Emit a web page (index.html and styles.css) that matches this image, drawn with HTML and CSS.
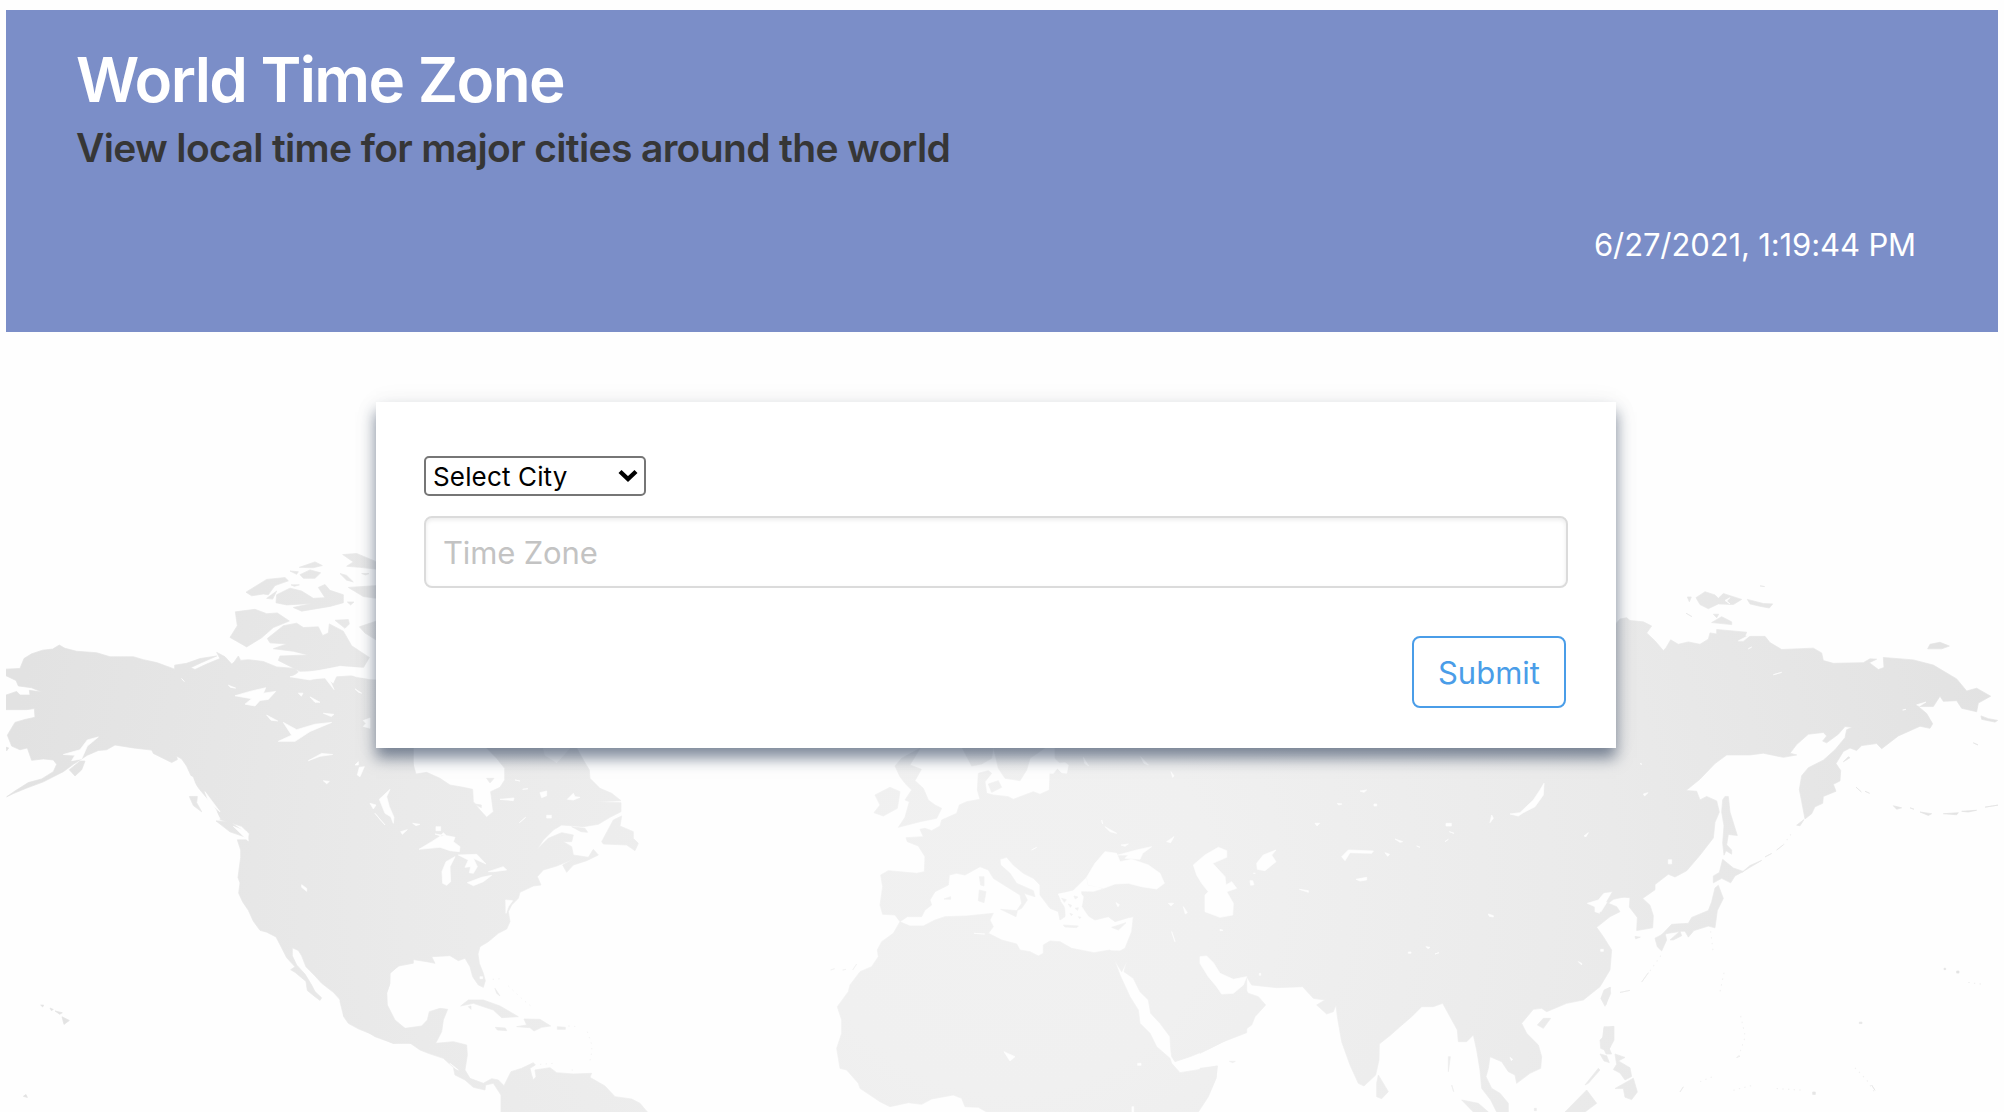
FILE: index.html
```html
<!DOCTYPE html>
<html lang="en">
<head>
<meta charset="utf-8">
<title>World Time Zone</title>
<link rel="stylesheet" href="styles.css">
</head>
<body>
<svg class="map" viewBox="0 0 2004 1112" aria-hidden="true">
  <defs>
    <radialGradient id="shade" gradientUnits="userSpaceOnUse" cx="1010" cy="890" r="1010">
      <stop offset="0" stop-color="#f1f1f1"/><stop offset=".2" stop-color="#f0f0f0"/><stop offset=".6" stop-color="#eaeaea"/><stop offset="1" stop-color="#e2e2e2"/>
    </radialGradient>
    <mask id="land" maskUnits="userSpaceOnUse" x="6" y="500" width="1992" height="612">
      <!-- Alaska, western Canada, Pacific coast -->
      <g transform="translate(0 540) scale(.33333 .3648)">
        <path class="l" d="M18 354L60 352 72 325 95 312 128 302 158 299 178 288 195 297 230 305 290 309 330 320 400 320 430 328 470 336 524 354 524 343 560 338 600 325 650 318 600 338 572 350 585 355 620 340 660 325 650 308 675 320 695 340 702 335 715 318 722 330 745 328 790 333 830 348 885 352 895 362 875 375 930 385 975 375 1000 395 1010 375 1060 372 1110 383 1140 383 1140 560 1240 560 1240 1160 1195 1168 1170 1188 1168 1220 1160 1240 1160 1275 1180 1315 1200 1332 1240 1350 1240 1380 1180 1380 1130 1360 1075 1340 1045 1325 1030 1305 1035 1275 1000 1240 965 1215 945 1195 918 1170 905 1140 895 1125 877 1118 877 1140 890 1165 915 1190 935 1220 945 1238 965 1255 960 1262 945 1252 922 1235 918 1210 885 1185 872 1178 885 1170 860 1145 845 1118 828 1088 800 1075 780 1070 760 1045 745 1015 728 992 716 968 720 940 714 925 722 870 722 850 712 822 745 822 748 805 725 785 660 766 650 740 625 712 600 685 580 660 560 620 545 600 530 592 532 602 515 610 460 585 455 576 400 570 345 562 320 575 295 577 262 590 245 600 220 615 190 635 130 663 80 680 40 695 20 704 45 688 85 665 125 655 160 635 170 615 160 603 130 600 95 604 82 570 60 575 35 565 22 535 45 500 75 492 105 486 103 462 80 465 18 465 18 425 50 415 60 425 90 425 88 412 125 417 95 405 55 400 48 385 18 372Z"/>
        <path class="l" d="M208 630L240 606 255 606 245 630 225 647ZM568 703L592 703 590 720 605 745 580 728ZM648 770L690 772 725 795 738 815 690 800ZM18 568l8 2-6 8ZM186 1307L208 1317 192 1328ZM150 1283l10 4-6 3ZM165 1291l22 5-8 4ZM122 1275l9 0-3 5ZM70 1525l8-5 4 8Z"/>
        <path class="l" d="M706 197L765 190 800 202 832 200 868 222 820 240 785 268 740 293 690 267 712 235ZM802 270L850 235 890 228 910 240 955 238 968 262 985 255 988 230 1030 250 1055 290 1108 322 1090 350 1020 345 960 358 900 360 835 330 840 318 925 315 880 305 820 298 860 285 810 282ZM1005 220L1045 218 1048 230 1035 242ZM738 143L800 108 855 103 865 112 825 125 805 150 790 148 755 153ZM830 150L870 132 905 140 940 160 975 158 955 130 975 122 990 138 1030 150 1030 172 990 182 905 195 880 185 935 174 860 178 828 172ZM800 160L830 140 818 162ZM898 75L945 60 967 70 940 76ZM870 85l25 2-5 7ZM900 95L930 82 962 90 945 105 910 105ZM1028 40L1070 37 1130 60 1130 80 1080 75 1040 72 1060 60ZM1020 92L1040 97 1060 115 1040 110ZM1045 130L1130 125 1130 160 1090 155ZM1078 238L1130 222 1130 275 1095 255ZM873 123l25 0-15 4ZM1042 170l20 0-10 8ZM1085 92l22 0-10 4Z"/>
        <path class="w" d="M295 540L262 548 240 575 190 588 225 590 215 605 245 600 262 565ZM705 427L750 415 797 405 790 420 827 415 805 437 780 440 765 455 735 450 755 435ZM850 500L890 520 945 505 995 500 930 525 885 552 835 552 875 535ZM925 605L965 585 998 588 960 593ZM905 945L920 955 920 963 905 952ZM970 660l18 2-8 6ZM1085 620L1092 633 1075 652 1078 635ZM1090 495l20-7 0 28-20-5 8-8ZM895 420l14 0-5 8ZM930 430L960 445 945 445ZM970 475l32 3-8 6ZM1065 408L1085 420 1075 417ZM1070 560l20 5-18 6ZM1140 712L1160 680 1170 690 1155 705 1172 735 1185 772 1175 780 1165 748 1145 735ZM1110 715l20 10-10 15ZM1125 750L1155 780 1135 768ZM870 375L930 362 1020 347 1100 352 1135 345 1135 382 1070 375 1025 360 985 375 1002 410 975 378 920 382ZM800 480l33 16-20-2ZM555 640L590 680 578 650ZM615 690L660 745 640 730 660 765 625 715ZM700 785L745 825 740 800ZM685 398l22 8-15-2ZM545 380l8 8Z"/>
      </g>
      <!-- Eastern North America, Caribbean, northern South America -->
      <g transform="translate(340 730) scale(.33333)">
        <path class="l" d="M0 0L190 20 190 80 215 88 228 132 260 127 300 145 330 165 370 172 398 178 400 215 420 240 440 262 460 245 452 185 480 172 494 150 494 115 470 85 440 54 440 20 690 20 710 54 730 90 748 120 750 145 780 175 815 190 843 212 768 215 843 218 843 245 810 262 775 283 730 290 665 285 640 300 610 330 592 357 625 325 665 308 700 315 695 335 670 335 695 350 700 375 745 382 760 358 775 375 740 392 700 405 680 427 668 405 700 388 650 408 610 420 592 440 603 465 580 468 540 487 535 505 515 525 505 545 510 575 500 597 475 610 445 635 420 650 414 672 418 700 430 730 436 752 430 772 415 765 398 740 390 710 375 685 355 692 330 677 275 680 285 700 260 695 215 688 190 697 150 728 150 760 140 790 142 825 165 870 195 895 245 888 262 870 268 845 300 835 323 838 310 870 305 905 287 940 340 935 380 945 382 975 375 1020 390 1045 430 1060 455 1046 475 1050 492 1067 513 1025 545 1015 580 998 586 1005 570 1015 575 1035 580 1050 588 1040 585 1020 630 1013 650 1028 700 1032 755 1030 750 1042 760 1048 795 1068 825 1100 875 1107 900 1120 922 1146 483 1146 483 1095 460 1060 437 1065 435 1080 400 1072 375 1050 345 1035 340 1012 310 985 265 970 240 960 200 932 160 940 105 920 70 898 30 880 10 855 0 815Z"/>
        <path class="l" d="M785 335L820 270 845 258 840 288 880 305 880 325 895 340 885 362 860 345 790 342ZM695 290l40 5 8 12-20-2ZM362 828L385 810 430 810 480 828 535 860 485 863 460 840 400 820ZM530 890L560 885 552 867 600 868 632 888 605 892 582 903 570 893ZM652 890l24 2 0 6-24 0ZM466 892l30 2 4 8-28-2ZM404 222l20 3 0 8ZM440 145l22 0-12 14ZM465 775L480 798 470 790ZM385 830l8-2 0 10Z"/>
        <path class="speck" d="M742 905L754 940 756 965 748 1000M458 748L485 746M505 768L550 810 580 834M600 1003L640 1000M685 888L715 890M695 1020L712 1022"/>
        <path class="w" d="M237 358L275 335 302 318 285 312 325 318 345 322 340 335 360 350 358 365 330 362 300 352ZM345 380L318 395 306 425 308 460 320 466 332 455 330 410ZM355 375L410 373 438 402 400 385 412 410 400 430 388 428 392 410 375 412 385 390ZM382 458L425 442 455 436 430 455 400 467ZM445 425L490 410 500 420 460 425ZM288 290h14v12h-14ZM118 208L150 178 140 200 148 230 162 262 160 280 152 260 135 250ZM90 220l18 5-8 12ZM105 250L135 285 120 268ZM182 305l20-6-15 14ZM218 280l22 3-12 4ZM480 208l42-4-2 8ZM548 178l16-2ZM538 278L557 262 545 272ZM600 188l20-5 0 14-15 6ZM682 208L700 190 705 200 720 202 700 210ZM497 510L498 550 505 530 518 512ZM45 105l10-10 0 10ZM58 112L73 110 60 140 52 135ZM620 256h14v8h-14ZM420 740h8v6h-8ZM330 1000L355 1020 345 1015ZM525 150l15 3ZM310 308L300 320 318 316Z"/>
        <path class="w" d="M610 54L690 54 650 98 615 75Z" opacity=".5"/>
      </g>
      <!-- Europe, Africa, Arabia -->
      <g transform="translate(820 740) scale(.33333)">
        <path class="l" d="M705 20L1280 20 1280 878 1210 905 1160 930 1110 950 1065 965 1055 950 1052 925 1050 890 1020 850 992 820 985 780 960 755 940 715 912 695 920 665 905 695 880 655 870 632 900 633 915 625 935 575 940 530 925 533 885 545 865 530 825 540 800 525 780 500 785 475 785 455 820 456 850 447 835 440 805 435 800 410 760 450 715 462 722 485 740 510 735 530 720 540 715 515 690 505 660 465 660 435 640 415 610 400 580 375 560 352 540 358 542 375 570 400 590 430 640 452 645 470 612 460 622 480 605 505 590 512 605 490 600 465 560 440 520 415 505 390 480 380 435 405 410 400 388 405 385 435 345 455 330 480 335 495 315 510 305 530 262 530 240 545 225 525 188 523 180 495 188 440 182 405 205 392 290 400 313 395 315 350 295 318 262 305 258 293 310 290 300 268 315 265 335 272 360 258 365 240 410 220 418 195 440 185 480 178 472 150 475 100 505 92 515 100 495 125 500 160 520 165 565 170 580 178 640 155 660 163 688 150 690 100 725 75 705 55Z"/>
        <path class="l" d="M520 20L680 20 630 55 620 90 600 122 575 118 555 115 535 85ZM425 20L520 20 515 55 485 72 455 78ZM505 132l30-10 10 20-30 15ZM225 78L245 55 300 25 270 75 304 88 285 122 310 145 325 180 345 195 365 205 350 235 300 245 235 262 255 232 268 185 255 180 275 150 255 130 240 110ZM165 165L210 142 240 155 232 205 190 228 162 218 180 195ZM478 410L492 410 492 438 482 435ZM478 450L498 455 492 488 475 482ZM542 508L592 512 588 530ZM730 555l45 3-5 5-35-2ZM875 562L918 548 895 570ZM372 477l20-7 0 8ZM32 690l12-4ZM68 690l10-2ZM98 690l12-18Z"/>
        <path class="l" d="M240 545L220 580 185 605 172 630 175 650 155 680 120 695 90 735 85 755 52 800 65 840 65 880 50 925 60 985 80 990 115 1030 120 1045 180 1085 210 1100 265 1088 305 1093 335 1077 400 1065 425 1075 435 1100 475 1102 500 1116 1135 1116 1165 1070 1188 1015 1192 978 1130 990 1080 998 1055 970 1050 955 1010 920 990 880 960 850 955 810 930 770 900 705 878 645 870 630 822 638 755 625 720 605 690 603 670 615 670 640 655 648 630 635 600 630 590 612 545 600 505 580 520 560 510 540 520 520 440 528 375 530 345 540 310 558 270 558 250 550Z"/>
        <path class="w" d="M805 435L800 412 825 370 855 335 890 340 900 365 935 358 985 375 1020 400 1033 430 1010 447 965 440 925 430 885 432 850 445ZM895 345L950 330 995 320 968 340 960 358 915 355 925 345ZM715 462L775 452 790 470 785 500 805 530 790 550 740 550 735 500ZM552 935L585 950 570 963ZM1040 305L1062 290 1052 308ZM903 315l22-3-10 7ZM845 240L848 252ZM855 260L890 280 870 275ZM1145 165L1160 142 1183 138 1160 150 1150 172ZM1053 95L1062 108 1058 112ZM953 970h10v6h-10ZM1045 490l16 0-8 8ZM1090 500L1102 518 1096 522ZM888 488l10 6-4 6ZM1055 575L1065 605ZM936 1100h5v16h-5ZM962 50L985 75 972 70ZM790 52L806 78 794 70ZM690 100L715 70 735 68 745 75 740 100 725 98 712 85 700 100ZM635 330L650 322ZM462 580l32 2Z"/>
        <path class="l" d="M725 475l14 4-6 8ZM745 492l10 4-4 6ZM762 468l12 3-8 6ZM765 505l10-2-2 8ZM750 520l8 3-4 4ZM775 530l8 2-4 4Z"/>
      </g>
      <!-- Central, southern and eastern Asia -->
      <g transform="translate(1200 740) scale(.33333)">
        <path class="l" d="M0 20L1275 20 1275 470 1240 478 1225 490 1250 500 1260 515 1230 530 1190 562 1210 590 1235 630 1230 690 1200 740 1150 780 1100 790 1040 815 1025 805 1000 808 965 850 980 880 1015 915 1025 950 1022 985 990 1000 950 1030 945 1005 925 995 905 965 870 950 865 985 858 1010 875 1045 900 1060 925 1090 925 1116 890 1116 872 1080 845 1045 840 990 830 930 820 885 800 905 775 905 772 870 750 830 728 790 700 800 665 800 635 830 600 860 572 885 538 912 537 960 527 1005 492 1038 475 1030 450 975 425 905 412 830 408 795 400 815 380 822 350 795 375 780 340 775 308 740 230 743 155 735 140 710 130 740 145 760 175 770 197 795 165 830 155 855 120 880 70 905 0 940Z"/>
        <path class="l" d="M535 1005L565 1055 545 1076 530 1070 530 1030ZM1012 855L1030 835 1052 835 1030 865ZM1232 742L1218 795 1203 775 1212 750ZM1212 860L1240 860 1240 895 1225 935 1202 925 1200 900 1210 890ZM0 985L52 978 48 1015 25 1065 0 1095ZM785 1080L835 1090 865 1116 820 1116ZM1095 1116L1160 1050 1190 1090 1155 1116ZM1155 1035L1195 985 1200 990 1165 1030ZM745 950l6 0-6 45ZM88 964l18 0-8 4ZM1003 1105h6v7h-6ZM755 1035l6 20Z"/>
        <path class="w" d="M0 650L20 648 40 668 60 700 100 718 140 710 130 735 100 760 65 762 50 740 25 710 0 670ZM-20 375L15 345 55 322 80 332 80 352 38 370 75 410 78 435 95 425 110 445 80 455 100 490 98 525 60 532 15 515 15 465 25 455 5 430 -10 405ZM170 370L190 345 228 330 215 345 228 365 195 392 172 388ZM425 350L445 330 520 333 515 340 450 338 435 362ZM468 418L500 412 500 420 480 423ZM298 448L325 452 325 457ZM1032 130L1030 165 1005 200 970 218 955 228 930 222 960 218 1000 180 1020 150ZM870 248L875 225 880 235ZM738 250h16v8h-16ZM735 305L745 298ZM865 522l15 5 0 4-12-2ZM585 297L608 305 600 307ZM555 338l14 5-6 6ZM412 190l14 2-10 3ZM480 153l20-3-8 7ZM345 250l14 0-8 8ZM150 422l8 0 4 12-10 2ZM160 400l6 0ZM1162 490L1195 480 1220 450 1240 455 1225 480 1200 520 1185 515 1185 500ZM1152 288L1165 278 1158 290ZM1135 665l10 5 0 5ZM1202 628h8v6h-8ZM522 192h8v6h-8ZM678 620l12 2-6 4ZM705 642l12-4ZM625 636h8v4h-8ZM60 568l9 3-9 1ZM178 700h4v6h-4ZM930 952l8 6-4 4ZM650 318l10 4ZM748 275l14 5Z"/>
      </g>
      <!-- Eastern Siberia, Japan, the Philippines -->
      <g transform="translate(1600 570) scale(.33333 .3457)">
        <path class="l" d="M48 155L60 142 80 138 90 146 130 150 155 162 140 182 165 205 190 233 198 225 212 202 235 215 265 208 300 215 325 200 330 182 350 185 350 172 440 180 435 192 495 192 510 210 545 230 640 226 665 240 670 262 700 270 790 268 810 257 830 258 808 268 835 288 852 282 850 253 940 260 1000 275 1070 315 1100 350 1130 342 1172 365 1135 385 1130 410 1085 400 1070 378 1030 380 1020 365 1000 395 955 395 980 415 998 445 990 458 960 452 895 480 845 517 830 502 785 508 770 522 750 515 730 525 708 560 722 580 720 610 700 620 708 640 670 655 668 675 645 685 635 705 615 720 605 670 598 635 605 595 625 572 670 550 705 520 735 485 740 462 757 455 735 453 715 475 680 500 668 495 680 480 670 470 625 475 590 505 570 530 590 535 550 542 490 530 450 535 380 535 345 560 300 605 258 638 290 640 300 665 320 655 350 668 358 700 345 730 340 775 300 825 260 870 225 888 205 880 165 910 165 925 128 950 150 970 160 1000 158 1035 110 1043 112 1005 88 975 90 948 55 945 20 960 38 930 0 935 0 510 48 510Z"/>
        <path class="l" d="M375 655L385 655 390 700 412 768 385 765 380 795 395 810 395 822 378 812 372 825 368 790 372 740 365 700 368 665ZM368 837L400 862 430 872 405 885 392 905 365 892 340 905 340 885 358 875ZM345 920L355 912 370 950 352 985 345 1035 325 1030 275 1045 245 1045 210 1050 185 1055 215 1025 265 1022 275 1005 325 985 335 960ZM165 1065L195 1050 200 1070 185 1102 172 1090ZM210 1070L240 1045 245 1058 220 1070ZM255 1045L280 1045 265 1062ZM0 990L45 992 15 1008 0 1020ZM30 1207L32 1225 15 1262 3 1240 15 1215ZM12 1325L42 1320 42 1360 28 1385 35 1400 18 1400 5 1370ZM45 1500L100 1470 112 1510 95 1532 75 1525 70 1500ZM45 1400L75 1410 55 1420 90 1440 95 1465 75 1475 60 1455 40 1445 50 1430ZM0 1400L20 1405 28 1425 12 1420ZM105 1060l16 2-14 5Z"/>
        <path class="l" d="M288 80L315 63 345 72 355 82 370 68 425 85 400 100 355 98 325 112 300 100ZM335 152L365 135 395 150 395 158ZM442 85L490 97 518 98 508 110 480 105 450 98ZM340 128l16 0-6 10ZM262 78l12 0-6 14ZM258 125l18 10ZM480 46l14 2ZM983 228L990 215 1020 209 1048 220 1025 228ZM1143 422L1165 430 1193 435 1185 440 1145 432ZM730 555L745 540 750 543ZM768 628l16 14ZM795 640l14 6ZM880 682L905 688 890 692ZM930 688l12 4ZM960 700L995 705 985 710ZM1030 705L1075 702 1070 708ZM1085 698L1130 695 1105 700ZM1155 686L1195 680ZM425 875L450 855 485 840 450 860ZM495 830L515 820ZM530 810L550 795ZM590 738L612 722 600 740ZM125 1192L145 1165ZM60 1222l30-6ZM778 1308h8v4h-8ZM1070 1160h7v6h-7ZM1032 1152h5v4h-5ZM638 1510h8v7h-8ZM240 1510l10-15ZM410 1410l10-4ZM1120 500l14 6ZM815 1490l10 15Z"/>
        <path class="speck" d="M550 795L580 755M150 1160L188 1108M332 1045L340 1110M372 1165L360 1220M422 1290L436 1350 415 1408M300 1480L340 1465M400 1505L460 1490M530 1500L610 1505M765 1440L800 1475 822 1508M1105 1193L1145 1198"/>
        <path class="w" d="M205 838h10v12h-10ZM130 648l14-4-10 10ZM375 88L390 80 380 90 390 98ZM415 205L455 185 430 205ZM520 303L545 296ZM908 405l10-2ZM950 390l28-8-20 12ZM445 228l10-5ZM120 560l6 2Z"/>
      </g>
    </mask>
  </defs>
  <rect x="6" y="500" width="1992" height="612" fill="url(#shade)" mask="url(#land)"/>
</svg>
<header class="banner">
  <h1 class="title">World Time Zone</h1>
  <h2 class="subtitle">View local time for major cities around the world</h2>
  <p class="clock">6/27/2021, 1:19:44 PM</p>
</header>
<main>
  <form class="card">
    <div class="select-wrap">
      <select class="select" aria-label="City"><option>Select City</option></select>
      <svg class="chevron" viewBox="0 0 20 14"><path d="M2 2.5l8 7.5 8-7.5" fill="none" stroke="#000" stroke-width="4.4"/></svg>
    </div>
    <input class="input" type="text" placeholder="Time Zone">
    <button class="button" type="button">Submit</button>
  </form>
</main>
</body>
</html>
```
FILE: styles.css
```css
* { box-sizing: border-box; }
html { background: #fefefe; overflow: hidden; }
body {
  margin: 0;
  padding: 10px 6px 0;
  height: 1112px;
  overflow: hidden;
  font-family: Inter, "Liberation Sans", sans-serif;
}
.map {
  position: absolute;
  inset: 0;
  width: 2004px;
  height: 1112px;
  z-index: -1;
}
.l { fill: #fff; stroke: #fff; stroke-width: 2; }
.w { fill: #000; stroke: #000; stroke-width: 2; }
.speck { fill: none; stroke: #999; stroke-width: 3; stroke-dasharray: 4 13; }
.banner {
  height: 322px;
  padding: 33px 82px 0 70px;
  background: #7b8ec8;
}
.title {
  margin: 0;
  color: #fff;
  font-size: 62px;
  font-weight: 600;
  line-height: 74px;
  letter-spacing: -1.6px;
}
.subtitle {
  margin: 0;
  color: #363636;
  font-size: 39px;
  font-weight: 600;
  line-height: 62px;
  letter-spacing: -0.65px;
}
.clock {
  margin: 42px 0 0;
  color: #fff;
  font-size: 31px;
  line-height: 48px;
  text-align: right;
  letter-spacing: -0.12px;
}
.card {
  display: flex;
  flex-direction: column;
  width: 1240px;
  height: 346px;
  margin: 70px 0 0 370px;
  padding: 54px 48px 0;
  background: #fff;
  box-shadow: 0 10px 14px rgba(30, 50, 80, .55), 0 2px 26px rgba(0, 30, 20, .06);
}
.select-wrap {
  display: grid;
  align-items: center;
  width: 222px;
}
.select, .chevron { grid-area: 1 / 1; }
.select {
  appearance: none;
  width: 222px;
  height: 40px;
  padding: 2px 7px 0;
  border: 2px solid #767676;
  border-radius: 5px;
  background: #fff;
  color: #000;
  font: 26px/34px Inter, "Liberation Sans", sans-serif;
  letter-spacing: .15px;
}
.chevron {
  justify-self: end;
  width: 20px;
  height: 14px;
  margin-right: 8px;
  pointer-events: none;
}
.input {
  width: 1144px;
  height: 72px;
  margin-top: 20px;
  padding: 0 17px;
  border: 2px solid #dbdbdb;
  border-radius: 8px;
  box-shadow: inset 0 2px 4px rgba(10, 10, 10, .08);
  font: 31px Inter, "Liberation Sans", sans-serif;
  letter-spacing: -.15px;
}
.input::placeholder { color: #c3c3c3; opacity: 1; }
.button {
  align-self: flex-end;
  width: 154px;
  height: 72px;
  margin: 48px 2px 0 0;
  padding: 0;
  border: 2px solid #4a9de8;
  border-radius: 8px;
  background: #fff;
  color: #4a9de8;
  font: 31px Inter, "Liberation Sans", sans-serif;
}
```
